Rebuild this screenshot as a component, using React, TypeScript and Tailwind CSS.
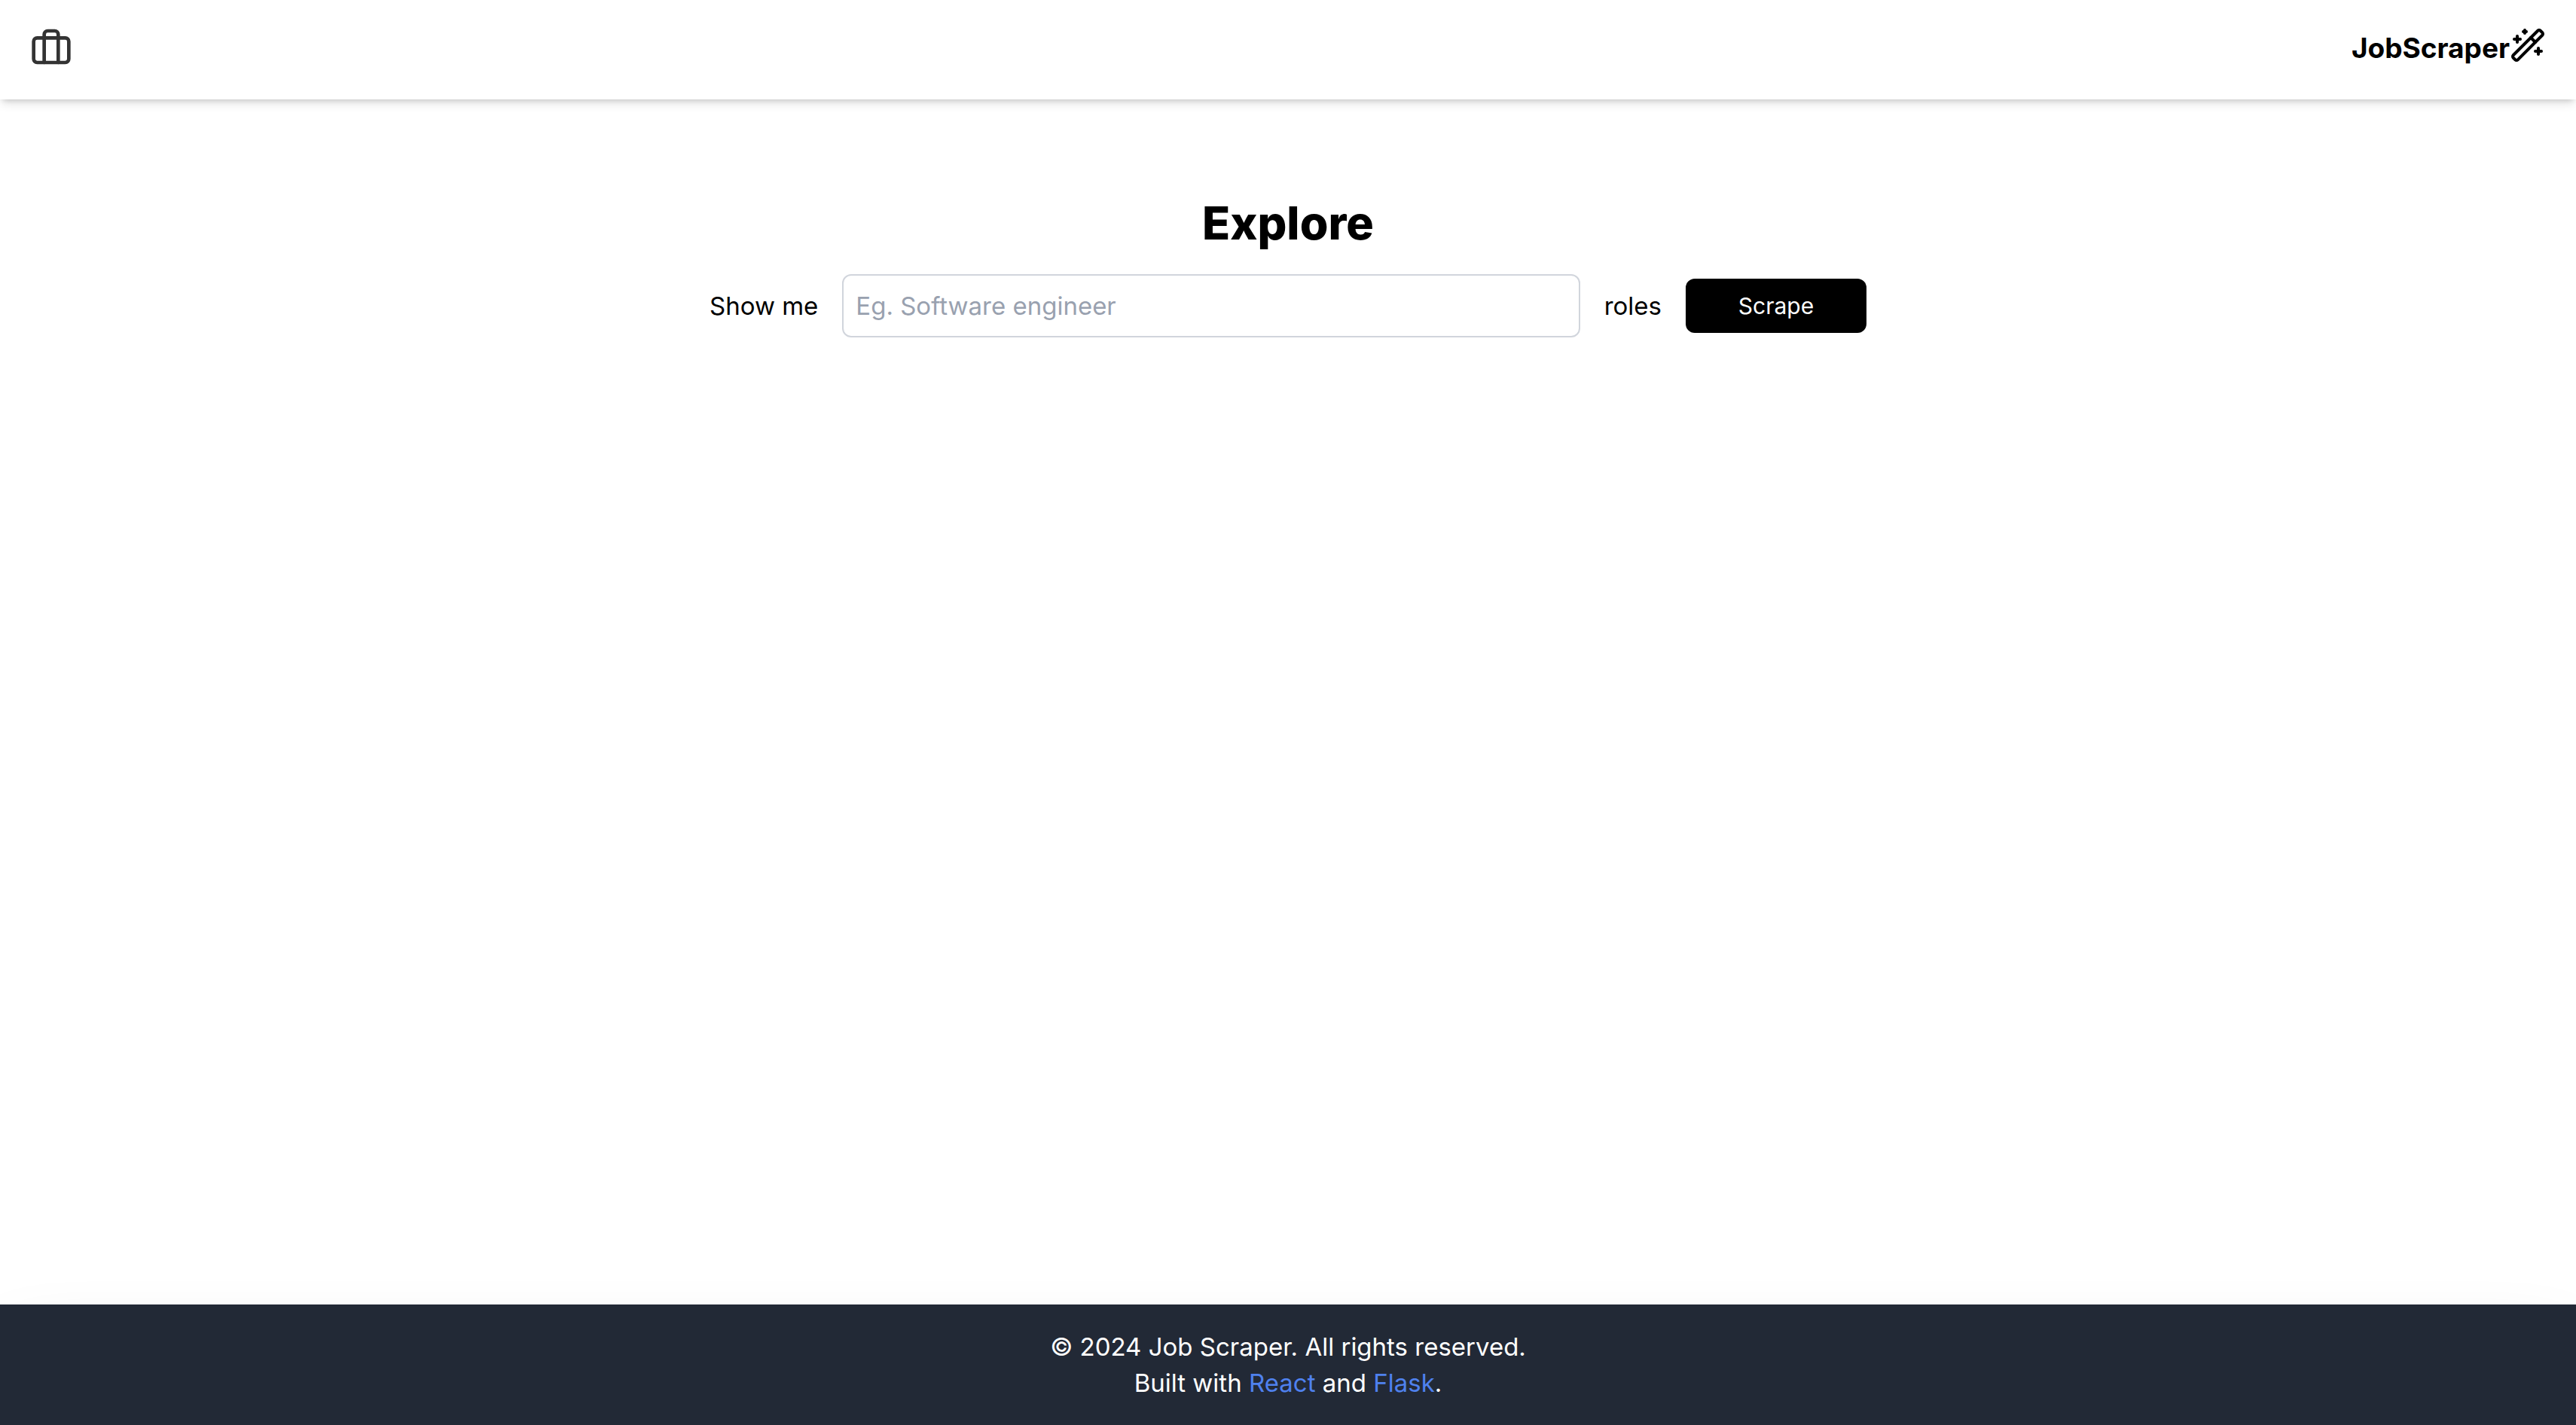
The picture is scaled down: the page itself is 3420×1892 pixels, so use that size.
import { WandSparkles } from "lucide-react";
import { FiBriefcase } from "react-icons/fi";

function Header() {
  return (
    <header className="flex h-33 items-center justify-between bg-white px-10 shadow-[0_8px_12px_-2px_rgba(0,0,0,0.1),0_4px_8px_-4px_rgba(0,0,0,0.2)]">
      <button type="button" aria-label="Jobs" className="pb-2 text-[#333]">
        <FiBriefcase size={56} />
      </button>
      <a href="#" className="flex items-center pb-3 text-[37px] leading-12 font-bold">
        <span className="pt-2">JobScraper</span>
        <WandSparkles size={48} />
      </a>
    </header>
  );
}

function SearchForm() {
  return (
    <form className="flex items-center gap-8 text-[33px] leading-12" onSubmit={(e) => e.preventDefault()}>
      <label htmlFor="role">Show me</label>
      <input
        id="role"
        type="text"
        placeholder="Eg. Software engineer"
        className="h-21 min-w-0 flex-1 rounded-xl border-2 border-gray-300 px-4 placeholder:text-gray-400"
      />
      <span>roles</span>
      <button type="submit" className="h-18 w-60 rounded-xl bg-black text-[30px] text-white">
        Scrape
      </button>
    </form>
  );
}

function Footer() {
  return (
    <footer className="bg-[#222936] py-8 text-center text-[33px] leading-12 text-white shadow-[0_50px_100px_-24px_rgba(0,0,0,0.25)]">
      <p>© 2024 Job Scraper. All rights reserved.</p>
      <p>
        Built with <a href="#" className="text-[#4f81ee]">React</a> and{" "}
        <a href="#" className="text-[#4f81ee]">Flask</a>.
      </p>
    </footer>
  );
}

export default function App() {
  return (
    <div className="flex min-h-screen flex-col bg-white font-['Inter',sans-serif] text-black">
      <Header />
      <main className="mx-auto w-full max-w-[1536px] flex-1 pt-32">
        <h1 className="mb-8 text-center text-[61px] leading-18 font-extrabold">Explore</h1>
        <SearchForm />
      </main>
      <Footer />
    </div>
  );
}
